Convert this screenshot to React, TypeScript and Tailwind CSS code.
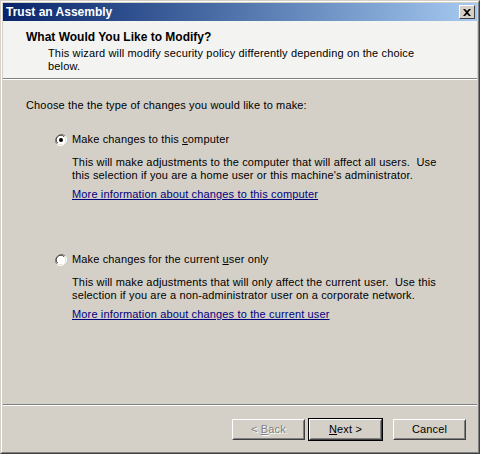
import React from 'react';

const font = { fontFamily: '"Liberation Sans", Arial, sans-serif' };

function Radio({ checked }: { checked?: boolean }) {
  return (
    <svg width="12" height="12" viewBox="0 0 12 12" className="shrink-0">
      <path d="M10.2 1.8 A6 6 0 0 0 1.8 10.2" fill="none" stroke="#808080" strokeWidth="1" />
      <path d="M1.8 10.2 A6 6 0 0 0 10.2 1.8" fill="none" stroke="#ffffff" strokeWidth="1" />
      <circle cx="6" cy="6" r="4.5" fill="#ffffff" />
      <path d="M9 2.6 A4.5 4.5 0 0 0 2.6 9" fill="none" stroke="#404040" strokeWidth="1" />
      {checked && <circle cx="6" cy="6" r="2" fill="#000000" />}
    </svg>
  );
}

function Option({
  checked,
  label,
  lines,
  link,
}: {
  checked?: boolean;
  label: [string, string, string];
  lines: string[];
  link: string;
}) {
  return (
    <div className="flex flex-col">
      <div className="flex items-center gap-[5px] pl-[52px] h-[13px]">
        <Radio checked={checked} />
        <span>
          {label[0]}
          <span className="underline">{label[1]}</span>
          {label[2]}
        </span>
      </div>
      <div className="pl-[69px] mt-[10px] whitespace-pre leading-[13px]">
        {lines.map((l) => (
          <div key={l}>{l}</div>
        ))}
      </div>
      <div className="pl-[69px] mt-[6px] leading-[13px]">
        <span className="underline text-[#00007f]">{link}</span>
      </div>
    </div>
  );
}

function Button({
  children,
  disabled,
  isDefault,
}: {
  children: React.ReactNode;
  disabled?: boolean;
  isDefault?: boolean;
}) {
  return (
    <div className={isDefault ? 'border border-black' : 'border border-transparent'}>
      <div className="border border-t-white border-l-white border-r-[#404040] border-b-[#404040]">
        <div className="w-[71px] h-[19px] flex items-center justify-center border border-t-[#d4d0c8] border-l-[#d4d0c8] border-r-[#808080] border-b-[#808080]">
          <span className={disabled ? 'text-[#808080] [text-shadow:1px_1px_0_#ffffff]' : 'text-black'}>
            {children}
          </span>
        </div>
      </div>
    </div>
  );
}

export default function App() {
  return (
    <div
      style={font}
      className="w-[480px] h-[454px] bg-[#d4d0c8] text-[11px] tracking-[0.15px] text-black border border-t-[#d4d0c8] border-l-[#d4d0c8] border-r-[#404040] border-b-[#404040] flex flex-col"
    >
      <div className="flex-1 flex flex-col border border-t-white border-l-white border-r-[#808080] border-b-[#808080] p-px">
        {/* title bar */}
        <div className="h-[18px] flex items-center justify-between pl-[3px] pr-[2px] bg-gradient-to-r from-[#0a246a] to-[#a6caf0]">
          <span className="text-white font-bold text-[12px] tracking-normal leading-none">Trust an Assembly</span>
          <div className="w-[16px] h-[14px] bg-[#d4d0c8] border border-t-white border-l-white border-r-[#404040] border-b-[#404040] flex items-center justify-center">
            <svg width="8" height="7" viewBox="0 0 8 7">
              <path d="M0 0 L2 0 L4 2 L6 0 L8 0 L5 3.5 L8 7 L6 7 L4 5 L2 7 L0 7 L3 3.5 Z" fill="#000" />
            </svg>
          </div>
        </div>

        {/* header */}
        <div className="h-[58px] bg-[#f3f3f1] border-b border-b-[#808080] pt-[10px] leading-[13px]">
          <div className="pl-[23px] font-bold text-[12px] tracking-normal">What Would You Like to Modify?</div>
          <div className="pl-[45px] mt-[3px] w-[430px]">
            This wizard will modify security policy differently depending on the choice below.
          </div>
        </div>
        <div className="h-px bg-white" />

        {/* body */}
        <div className="flex-1 flex flex-col">
          <div className="pl-[23px] pt-[19px] leading-[13px]">Choose the the type of changes you would like to make:</div>
          <div className="mt-[21px]">
            <Option
              checked
              label={['Make changes to this ', 'c', 'omputer']}
              lines={[
                'This will make adjustments to the computer that will affect all users.  Use',
                "this selection if you are a home user or this machine's administrator.",
              ]}
              link="More information about changes to this computer"
            />
          </div>
          <div className="mt-[52px]">
            <Option
              label={['Make changes for the current ', 'u', 'ser only']}
              lines={[
                'This will make adjustments that will only affect the current user.  Use this',
                'selection if you are a non-administrator user on a corporate network.',
              ]}
              link="More information about changes to the current user"
            />
          </div>
        </div>

        {/* footer */}
        <div className="h-px bg-[#808080]" />
        <div className="h-px bg-white" />
        <div className="h-[45px] flex items-start justify-end pt-[12px] pr-[10px]">
          <div className="flex">
            <Button disabled>
              &lt; <span className="underline">B</span>ack
            </Button>
            <div className="ml-[2px]">
              <Button isDefault>
                <span className="underline">N</span>ext &gt;
              </Button>
            </div>
            <div className="ml-[9px]">
              <Button>Cancel</Button>
            </div>
          </div>
        </div>
      </div>
    </div>
  );
}
